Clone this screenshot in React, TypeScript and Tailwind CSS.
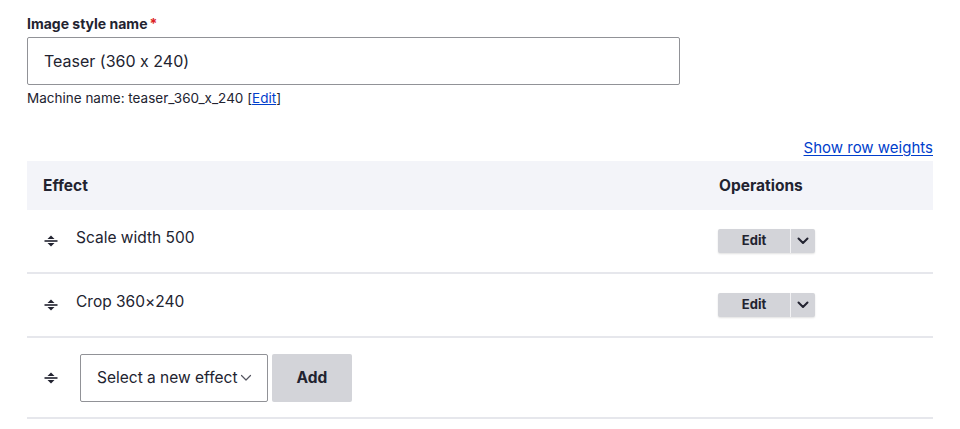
const Handle = () => (
  <svg width="14" height="14" viewBox="0 0 14 14" className="shrink-0" aria-hidden="true">
    <path d="M7 1.5 L10.5 5 H3.5 Z" fill="#222330" />
    <rect x="0.5" y="6.2" width="13" height="1.6" fill="#222330" />
    <path d="M7 12.5 L10.5 9 H3.5 Z" fill="#222330" />
  </svg>
);

const Chevron = ({ className = '', thin = false }: { className?: string; thin?: boolean }) => (
  <svg width="12" height="8" viewBox="0 0 12 8" className={className} aria-hidden="true">
    <path d="M1.5 1.5 L6 6 L10.5 1.5" fill="none" stroke="currentColor" strokeWidth={thin ? 1.2 : 2} strokeLinecap="round" strokeLinejoin="round" />
  </svg>
);

const EditButton = () => (
  <div className="flex h-6 w-[97px] rounded-[2px] bg-[#d3d4d9] shadow-[0_1px_2px_rgba(0,0,0,0.12)]">
    <span className="flex flex-1 items-center justify-center text-[13px] font-bold text-[#222330]">Edit</span>
    <span className="w-px bg-white/70" />
    <span className="flex w-6 items-center justify-center text-[#222330]">
      <Chevron />
    </span>
  </div>
);

const effects = ['Scale width 500', 'Crop 360×240'];

export default function App() {
  return (
    <div className="min-h-screen bg-white px-[27px] pt-[14px] text-[#222330] [font-feature-settings:'calt'_0]" style={{ fontFamily: 'Inter, "Noto Sans", sans-serif' }}>
      <label className="block text-[14px] font-bold leading-5">
        Image style name<span className="ml-0.5 text-[#dc2323]">*</span>
      </label>
      <div className="mt-[3px] flex h-12 w-[653px] items-center rounded-[2px] border border-[#919297] pl-4 text-[16px]">
        Teaser (360 x 240)
      </div>
      <p className="mt-[5px] text-[13.5px] leading-4">
        Machine name: teaser_360_x_240 [<a className="text-[#003ecc] underline">Edit</a>]
      </p>

      <div className="mt-[32px] flex justify-end">
        <a className="text-[15px] leading-5 text-[#003ecc] underline underline-offset-2">Show row weights</a>
      </div>

      <div className="mt-[3px] w-[906px]">
        <div className="flex h-[49px] items-center bg-[#f3f4f9] text-[15.5px] font-bold">
          <div className="flex-1 pl-4">Effect</div>
          <div className="w-[230px] pl-4">Operations</div>
        </div>
        {effects.map((e) => (
          <div key={e} className="flex h-16 items-center border-b-2 border-[#e6e7ec]">
            <div className="flex flex-1 items-center gap-[18px] pl-[17px] text-[15.5px]">
              <Handle />
              <span className="-mt-1.5">{e}</span>
            </div>
            <div className="w-[230px] pl-[15px]">
              <EditButton />
            </div>
          </div>
        ))}
        <div className="flex h-[81px] items-center border-b-2 border-[#e6e7ec]">
          <div className="flex items-center pl-[17px]">
            <Handle />
            <div className="ml-[22px] flex h-12 w-[188px] items-center rounded-[2px] border border-[#919297] pl-4 pr-2 text-[15.5px]">
              <span>Select a new effect</span>
              <Chevron thin className="ml-0.5 text-[#545560]" />
            </div>
            <button className="ml-1 flex h-12 w-[80px] items-center justify-center rounded-[2px] bg-[#d3d4d9] text-[15.5px] font-bold">
              Add
            </button>
          </div>
        </div>
      </div>
    </div>
  );
}
